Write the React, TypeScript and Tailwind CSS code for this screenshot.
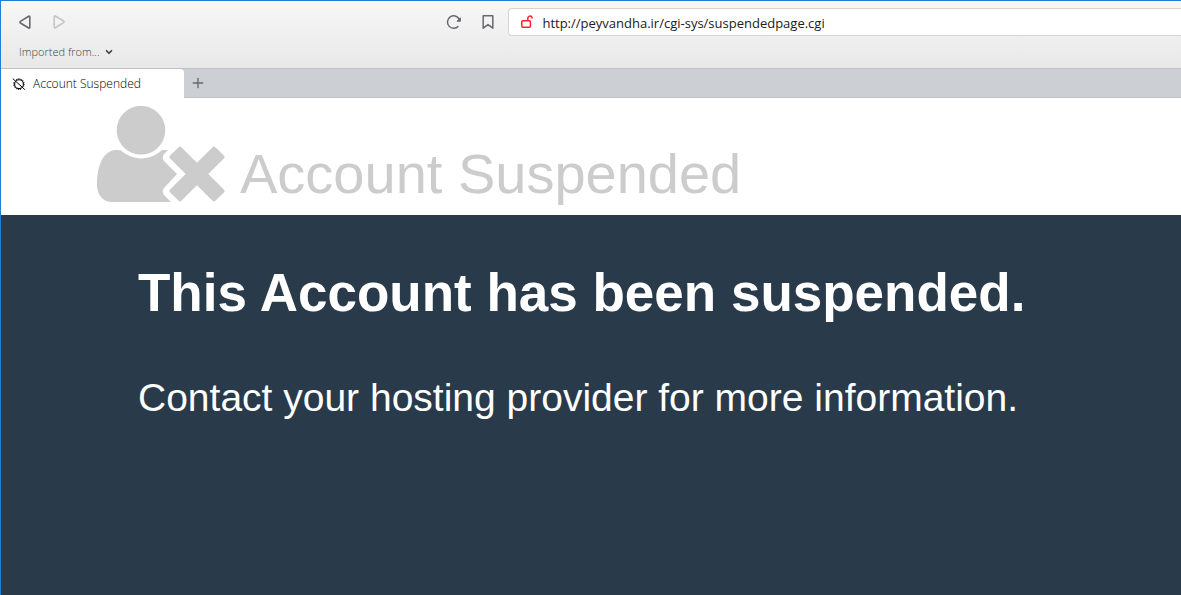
import { ChevronDown, Plus } from "lucide-react";

const BackIcon = () => (
  <svg viewBox="0 0 14 16" className="h-4 w-3.5" fill="none" stroke="currentColor" strokeWidth="1.6" strokeLinejoin="round">
    <path d="M11.8 2.8v10.6c0 .7-.6.9-1.1.6L2.4 9c-.6-.4-.6-1.2 0-1.6l8.3-5.1c.5-.3 1.1-.1 1.1.5z" />
  </svg>
);

const ReloadIcon = () => (
  <svg viewBox="0 0 16 16" className="size-4" fill="none" stroke="currentColor" strokeWidth="1.5">
    <path d="M12.3 12.2A6.2 6.2 0 1 1 13.2 5.2" />
    <path d="M14.4 3.8v3.4h-3.4z" fill="currentColor" strokeWidth="1" strokeLinejoin="round" />
  </svg>
);

const BookmarkIcon = () => (
  <svg viewBox="0 0 12 16" className="h-4 w-3" fill="none" stroke="currentColor" strokeWidth="1.5" strokeLinejoin="round">
    <path d="M1.2 1.8h9.6v12.4L6 10.6l-4.8 3.6z" />
  </svg>
);

const UnlockIcon = () => (
  <svg viewBox="0 0 12 14" className="h-3.5 w-3 text-[#fb2227]" fill="none" stroke="currentColor" strokeWidth="1.5">
    <rect x="0.8" y="5.8" width="8.6" height="6.4" rx="1" />
    <path d="M6.8 5.8V3.4c0-2.8 3.8-3 4.3-.8v1" />
  </svg>
);

const NoFaviconIcon = () => (
  <svg viewBox="0 0 14 14" className="size-3.5" fill="none" stroke="currentColor">
    <circle cx="7" cy="7.2" r="4.4" strokeWidth="1.1" />
    <path d="M4.2 2.6C6 1.4 9 1.6 10.6 3.2s2 4.200 1 6.400M1.800 5.400C1.200 8 2.600 11.400 5.400 12.200c1.400.4 2.600.4 4-.2" strokeWidth="0.9" strokeDasharray="1.200 1" />
    <path d="M0.800 1.600l12 11" strokeWidth="1" />
  </svg>
);

const UserTimesIcon = () => (
  <svg viewBox="0 0 128 96" className="h-24 w-32 shrink-0" fill="currentColor" aria-hidden="true">
    <circle cx="44" cy="24.2" r="24.3" />
    <path d="M19 44C6 44.5 0 60 0 79c0 10 6 17 15 17h59l-6-6c-3-3-3-6 0-9l12-13-12-12c-3-3-3-6 0-9l3-3h-6c-6 5.4-13 8.4-21 8.4S30 49.4 24 44.6c-1.5-.6-3-.7-5-.6z" />
    <g transform="rotate(45 100 68)">
      <rect x="68" y="60" width="64" height="16" rx="2" />
      <rect x="92" y="36" width="16" height="64" rx="2" />
    </g>
  </svg>
);

const App = () => {
  return (
    <div className="flex min-h-screen flex-col border-l border-[#1e80d2] bg-white font-['Liberation_Sans',Arial,sans-serif]">
      {/* Browser toolbar */}
      <header className="border-t border-[#1e80d2] bg-linear-to-b from-[#f7f7f7] to-[#e8e8e8] font-['Open_Sans','Noto_Sans',sans-serif]">
        <div className="flex items-center pt-[7px] text-[#67676d]">
          <div className="flex flex-1 items-center gap-5 pl-[17px]">
            <button type="button" aria-label="Back">
              <BackIcon />
            </button>
            <button type="button" aria-label="Forward" disabled className="rotate-180 text-[#c4c5c9]">
              <BackIcon />
            </button>
            <button type="button" aria-label="Reload" className="ml-auto">
              <ReloadIcon />
            </button>
            <button type="button" aria-label="Bookmark" className="mr-3.5">
              <BookmarkIcon />
            </button>
          </div>
          <div className="flex h-7 w-[57%] items-center gap-[9px] rounded-l border border-r-0 border-[#d5d5d5] bg-white pl-3">
            <UnlockIcon />
            <input
              type="text"
              aria-label="Address"
              defaultValue="http://peyvandha.ir/cgi-sys/suspendedpage.cgi"
              className="min-w-0 flex-1 bg-transparent pt-1 text-[13px] text-[#202020] outline-none"
            />
          </div>
        </div>

        {/* Bookmarks bar */}
        <div className="flex h-8 items-center pl-[18px]">
          <button type="button" className="flex items-center gap-1 text-[11px] font-light text-[#404044]">
            Imported from...
            <ChevronDown className="size-2.5" strokeWidth={4} />
          </button>
        </div>
      </header>

      {/* Tabs */}
      <nav className="flex h-[30px] border-y border-[#bfc3c6] bg-[#cccfd4] font-['Open_Sans','Noto_Sans',sans-serif]">
        <button
          type="button"
          className="-mb-px flex w-[183px] items-center gap-[7px] rounded-tr-sm bg-white pl-[11px] text-xs font-light text-black"
        >
          <NoFaviconIcon />
          Account Suspended
        </button>
        <button type="button" aria-label="New tab" className="px-1.5 text-[#67676d]">
          <Plus className="size-4" strokeWidth={2} />
        </button>
      </nav>

      {/* Page header */}
      <div className="flex items-end gap-[15px] px-24 pt-2 pb-[13px] text-[#cccccc]">
        <UserTimesIcon />
        <span className="text-[56px] leading-[56px]">Account Suspended</span>
      </div>

      {/* Page content */}
      <main className="flex-1 bg-[#293a4a] px-[137px] pt-12 text-white">
        <h1 className="text-[53px] leading-[60px] font-bold">This Account has been suspended.</h1>
        <p className="mt-12 text-[39px] leading-[54px]">Contact your hosting provider for more information.</p>
      </main>
    </div>
  );
};

export default App;
